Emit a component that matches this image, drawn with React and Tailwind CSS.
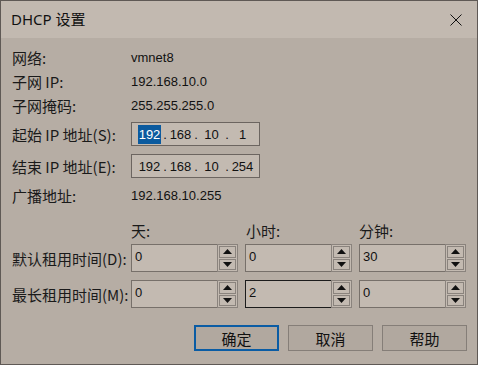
const cjk = { fontFamily: '"Noto Sans CJK SC", "Noto Sans", sans-serif' };
const lat = { fontFamily: '"Liberation Sans", Arial, sans-serif' };

function Label({ children }) {
  return (
    <div className="w-[119px] shrink-0 text-[15px] leading-none text-[#1a1a1a]" style={cjk}>
      {children}
    </div>
  );
}

function InfoRow({ label, value, className = "" }) {
  return (
    <div className={`flex items-center h-[24px] ${className}`}>
      <Label>{label}</Label>
      <div className="text-[13px] leading-none text-[#111]" style={lat}>
        {value}
      </div>
    </div>
  );
}

function IpBox({ parts, selectFirst }) {
  return (
    <div
      className="flex items-center h-[24px] w-[129px] border border-[#6c6560] bg-[#c3bab1] pl-[6px] text-[13px] leading-none text-[#111]"
      style={lat}
    >
      {parts.map((p, i) => (
        <div key={i} className="flex items-center">
          {i > 0 && <span className="w-[8px] text-center">.</span>}
          <span className="w-[23px] flex justify-center">
            {selectFirst && i === 0 ? (
              <span className="bg-[#0b5a9e] text-white px-[1px] py-[3px]">{p}</span>
            ) : (
              p
            )}
          </span>
        </div>
      ))}
    </div>
  );
}

function Arrow({ up }) {
  return (
    <svg width="9" height="5" viewBox="0 0 9 5">
      {up ? <path d="M0 5 L4.5 0 L9 5 Z" fill="#111" /> : <path d="M0 0 L4.5 5 L9 0 Z" fill="#111" />}
    </svg>
  );
}

function Spinner({ value, focused }) {
  return (
    <div className="flex h-[28px] w-[107px] bg-[#c3bab1]">
      <div
        className={`flex-1 border-y border-l ${
          focused ? "border-[#1c1c1c]" : "border-[#77706a]"
        } pl-[3px] pt-[5px] text-[13px] leading-none text-[#111]`}
        style={lat}
      >
        {value}
      </div>
      <div className="flex flex-col w-[21px] border border-[#8a837d] p-[1px] gap-[1px]">
        <div className="flex-1 flex items-center justify-center border border-[#8a837d]">
          <Arrow up />
        </div>
        <div className="flex-1 flex items-center justify-center border border-[#8a837d]">
          <Arrow />
        </div>
      </div>
    </div>
  );
}

function Button({ children, primary }) {
  return (
    <div
      className={`flex items-center justify-center w-[85px] h-[26px] bg-[#b1a89f] text-[15px] leading-none text-[#111] ${
        primary ? "border-2 border-[#0a5ca4]" : "border border-[#857e78]"
      }`}
      style={cjk}
    >
      {children}
    </div>
  );
}

export default function App() {
  return (
    <div className="w-[478px] h-[365px] border border-[#5f5955] bg-[#b6ada4] flex flex-col overflow-hidden">
      {/* Title bar */}
      <div className="h-[37px] bg-[#c2b9b0] flex items-center justify-between pl-[10px] pr-[15px] shrink-0">
        <div className="text-[15px] leading-none text-[#111]" style={{ fontFamily: '"Noto Sans", "Noto Sans CJK SC", sans-serif' }}>
          DHCP 设置
        </div>
        <svg width="12" height="12" viewBox="0 0 12 12">
          <path d="M0.5 0.5 L11.5 11.5 M11.5 0.5 L0.5 11.5" stroke="#111" strokeWidth="1" />
        </svg>
      </div>

      {/* Body */}
      <div className="pl-[11px] pr-[10px] pt-[7px] flex flex-col">
        <InfoRow label="网络:" value="vmnet8" />
        <InfoRow label="子网 IP:" value="192.168.10.0" />
        <InfoRow label="子网掩码:" value="255.255.255.0" />

        <div className="flex items-center mt-[5px]">
          <Label>起始 IP 地址(S):</Label>
          <IpBox parts={["192", "168", "10", "1"]} selectFirst />
        </div>
        <div className="flex items-center mt-[8px]">
          <Label>结束 IP 地址(E):</Label>
          <IpBox parts={["192", "168", "10", "254"]} />
        </div>

        <InfoRow label="广播地址:" value="192.168.10.255" className="mt-[5px]" />

        {/* Lease times */}
        <div className="grid grid-cols-[112px_107px_107px_107px] gap-x-[7px] mt-[13px]">
          <div className="col-start-2 h-[20px] flex items-center text-[15px] leading-none text-[#1a1a1a]" style={cjk}>
            天:
          </div>
          <div className="h-[20px] flex items-center pl-[1px] text-[15px] leading-none text-[#1a1a1a]" style={cjk}>
            小时:
          </div>
          <div className="h-[20px] flex items-center text-[15px] leading-none text-[#1a1a1a]" style={cjk}>
            分钟:
          </div>

          <div className="mt-[4px] flex items-center">
            <Label>默认租用时间(D):</Label>
          </div>
          <div className="mt-[4px]"><Spinner value="0" /></div>
          <div className="mt-[4px]"><Spinner value="0" /></div>
          <div className="mt-[4px]"><Spinner value="30" /></div>

          <div className="mt-[8px] flex items-center">
            <Label>最长租用时间(M):</Label>
          </div>
          <div className="mt-[8px]"><Spinner value="0" /></div>
          <div className="mt-[8px]"><Spinner value="2" focused /></div>
          <div className="mt-[8px]"><Spinner value="0" /></div>
        </div>

        {/* Buttons */}
        <div className="flex justify-end gap-[9px] mt-[17px]">
          <Button primary>确定</Button>
          <Button>取消</Button>
          <Button>帮助</Button>
        </div>
      </div>
    </div>
  );
}
